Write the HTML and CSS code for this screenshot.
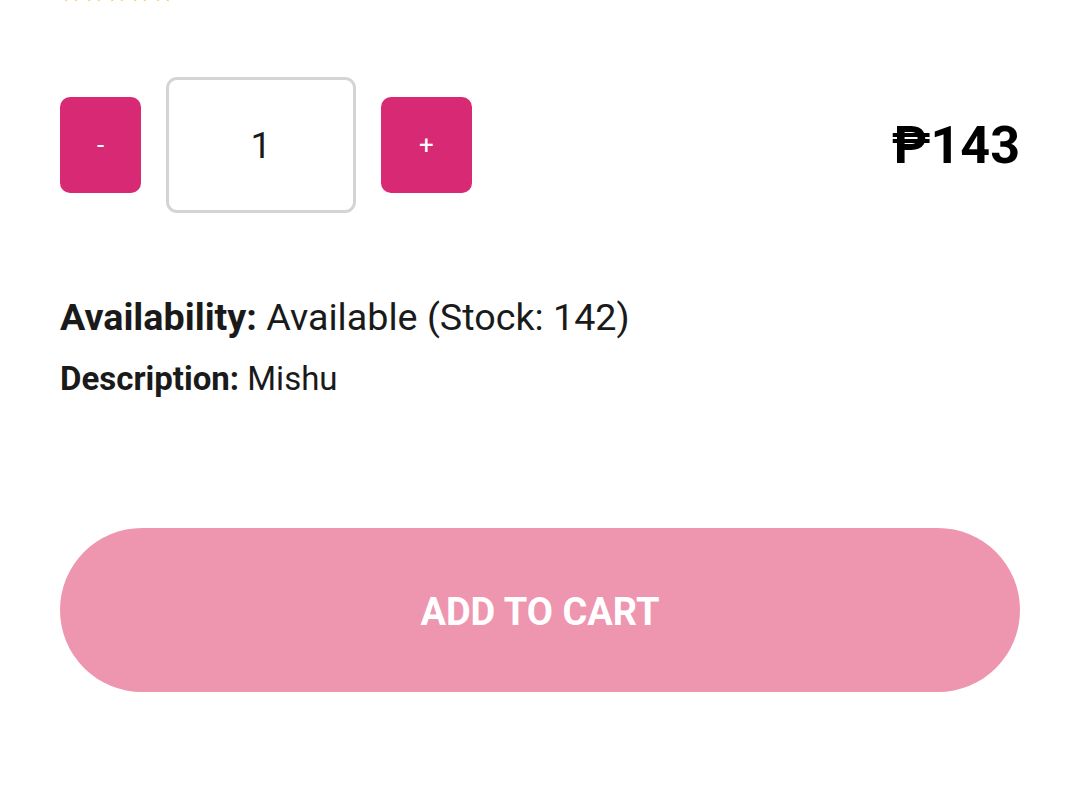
FILE: index.html
```html
<!DOCTYPE html>
<html lang="en">
<head>
<meta charset="utf-8">
<title>Product</title>
<link rel="stylesheet" href="styles.css">
</head>
<body>
<main class="product">
  <div class="stars">
    <svg class="star" viewBox="0 0 24 24"><path d="M12 2l2.9 6.9 7.1.6-5.4 4.7 1.6 7-6.2-3.8-6.2 3.8 1.6-7L2 9.5l7.1-.6z"/></svg>
    <svg class="star" viewBox="0 0 24 24"><path d="M12 2l2.9 6.9 7.1.6-5.4 4.7 1.6 7-6.2-3.8-6.2 3.8 1.6-7L2 9.5l7.1-.6z"/></svg>
    <svg class="star" viewBox="0 0 24 24"><path d="M12 2l2.9 6.9 7.1.6-5.4 4.7 1.6 7-6.2-3.8-6.2 3.8 1.6-7L2 9.5l7.1-.6z"/></svg>
    <svg class="star" viewBox="0 0 24 24"><path d="M12 2l2.9 6.9 7.1.6-5.4 4.7 1.6 7-6.2-3.8-6.2 3.8 1.6-7L2 9.5l7.1-.6z"/></svg>
    <svg class="star" viewBox="0 0 24 24"><path d="M12 2l2.9 6.9 7.1.6-5.4 4.7 1.6 7-6.2-3.8-6.2 3.8 1.6-7L2 9.5l7.1-.6z"/></svg>
  </div>

  <div class="qty-row">
    <div class="qty">
      <button class="qty-btn minus" type="button">-</button>
      <div class="qty-input">1</div>
      <button class="qty-btn plus" type="button">+</button>
    </div>
    <div class="price">₱143</div>
  </div>

  <div class="info">
    <p class="availability"><strong>Availability:</strong> Available (Stock: 142)</p>
    <p class="description"><strong>Description:</strong> Mishu</p>
  </div>

  <button class="add-cart" type="button">ADD TO CART</button>
</main>
</body>
</html>
```

FILE: styles.css
```css
* { box-sizing: border-box; }
html, body { margin: 0; padding: 0; background: #ffffff; }
body {
  font-family: Roboto, "Liberation Sans", Arial, sans-serif;
  color: #1a1a1a;
}
.product {
  padding: 0 60px;
  display: flex;
  flex-direction: column;
}
.stars {
  display: flex;
  gap: 1px;
  margin-top: -18px;
  height: 20px;
  overflow: hidden;
}
.star {
  flex: none;
  width: 22px;
  height: 22px;
  fill: #f3c13a;
}
.qty-row {
  margin-top: 75px;
  display: flex;
  align-items: center;
  justify-content: space-between;
}
.qty {
  display: flex;
  align-items: center;
  gap: 25px;
}
.qty-btn {
  height: 96px;
  border: none;
  border-radius: 10px;
  background: #d82a74;
  color: #ffffff;
  font-family: Roboto, sans-serif;
  font-size: 26px;
  padding: 0;
}
.qty-btn.minus { width: 81px; }
.qty-btn.plus { width: 91px; }
.qty-input {
  width: 190px;
  height: 136px;
  border: 3px solid #d4d4d4;
  border-radius: 11px;
  display: flex;
  align-items: center;
  justify-content: center;
  font-size: 37px;
  color: #1a1a1a;
}
.price {
  font-size: 52px;
  font-weight: 700;
  color: #000000;
}
.info {
  margin-top: 80px;
}
.info p { margin: 0; }
.info strong { font-weight: 700; }
.availability {
  font-size: 37.7px;
  line-height: 48px;
}
.info .description {
  font-size: 33px;
  line-height: 42px;
  margin-top: 17px;
}
.add-cart {
  margin-top: 128px;
  height: 164px;
  width: 100%;
  border: none;
  border-radius: 82px;
  background: #ee95b0;
  color: #ffffff;
  font-family: Roboto, sans-serif;
  font-weight: 700;
  font-size: 38px;
  padding-top: 4px;
}
```
